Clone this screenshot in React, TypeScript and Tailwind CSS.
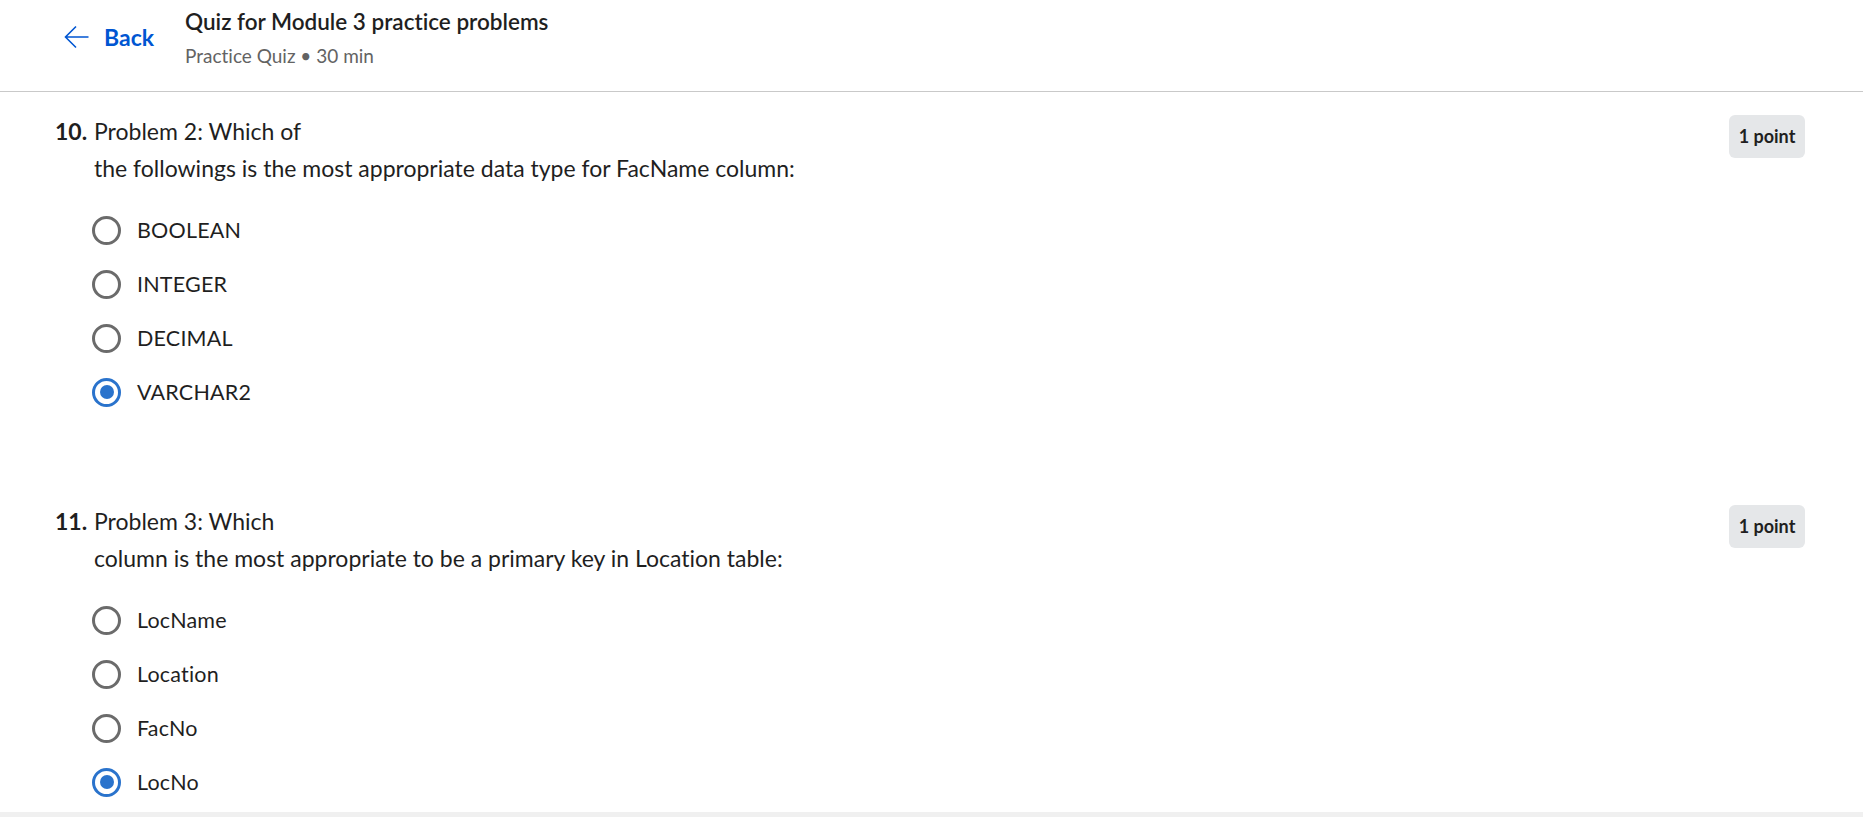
const font = { fontFamily: "Lato, 'Noto Sans', sans-serif" };

type Question = {
  num: string;
  line1: string;
  line2: string;
  options: string[];
  selected: number;
};

const questions: Question[] = [
  {
    num: "10.",
    line1: "Problem 2: Which of",
    line2: "the followings is the most appropriate data type for FacName column:",
    options: ["BOOLEAN", "INTEGER", "DECIMAL", "VARCHAR2"],
    selected: 3,
  },
  {
    num: "11.",
    line1: "Problem 3: Which",
    line2: "column is the most appropriate to be a primary key in Location table:",
    options: ["LocName", "Location", "FacNo", "LocNo"],
    selected: 3,
  },
];

function Radio({ checked }: { checked: boolean }) {
  if (checked) {
    return (
      <span className="flex h-[29px] w-[29px] shrink-0 items-center justify-center rounded-full border-[3px] border-[#2a73cc]">
        <span className="h-[14px] w-[14px] rounded-full bg-[#2a73cc]" />
      </span>
    );
  }
  return <span className="h-[29px] w-[29px] shrink-0 rounded-full border-[3px] border-[#6b6b6b]" />;
}

function QuestionBlock({ q }: { q: Question }) {
  return (
    <div className="flex items-start pr-[58px]">
      <div className="flex-1">
        <div className="flex text-[23px] leading-[37px] text-[#1f1f1f]">
          <span className="w-[39px] font-bold">{q.num}</span>
          <div>
            <p>{q.line1}</p>
            <p>{q.line2}</p>
          </div>
        </div>
        <div className="mt-[16px] pl-[37px]">
          {q.options.map((opt, i) => (
            <label key={opt} className="flex h-[54px] items-center gap-[16px]">
              <Radio checked={i === q.selected} />
              <span className="text-[21.5px] tracking-[0.2px] text-[#1f1f1f]">{opt}</span>
            </label>
          ))}
        </div>
      </div>
      <span className="mt-[2px] flex h-[43px] w-[76px] items-center justify-center rounded-[6px] bg-[#e5e7e9] text-[18px] font-bold text-[#1f1f1f]">
        1 point
      </span>
    </div>
  );
}

export default function App() {
  return (
    <div
      className="flex h-[817px] flex-col overflow-hidden bg-white [font-variant-ligatures:none]"
      style={font}
    >
      {/* Header */}
      <header className="flex h-[92px] shrink-0 items-start border-b border-[#c9c9c9] pl-[64px]">
        <button className="mt-[25px] flex items-center gap-[15px] text-[#0056d2]">
          <svg width="25" height="24" viewBox="0 0 25 24" fill="none" stroke="currentColor" strokeWidth="1.6">
            <path d="M24.5 12H1.5M12 1.5L1.5 12L12 22.5" />
          </svg>
          <span className="text-[23px] font-bold leading-[24px]">Back</span>
        </button>
        <div className="ml-[31px] mt-[8px]">
          <h1 className="text-[22.5px] font-semibold leading-[28px] text-[#1f1f1f]">
            Quiz for Module 3 practice problems
          </h1>
          <p className="mt-[7px] text-[19px] leading-[26px] text-[#636363]">Practice Quiz • 30 min</p>
        </div>
      </header>

      {/* Questions */}
      <main className="flex-1 pl-[55px] pt-[21px]">
        <QuestionBlock q={questions[0]} />
        <div className="mt-[84px]">
          <QuestionBlock q={questions[1]} />
        </div>
      </main>

      <div className="h-[5px] shrink-0 bg-[#f0f0f0]" />
    </div>
  );
}
